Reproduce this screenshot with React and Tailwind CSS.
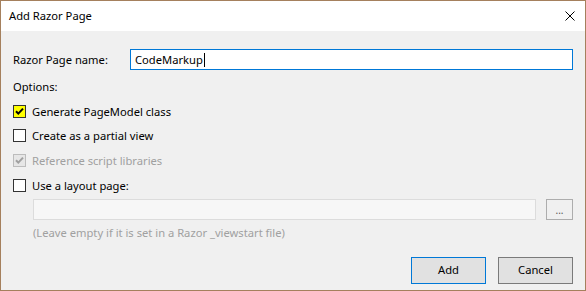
import React from 'react';

// Windows-style checkbox (13x13)
const CheckBox = ({ checked, disabled, highlight }) => {
  const box = disabled
    ? 'border-[#bcbcbc] bg-[#e6e6e6]'
    : highlight
    ? 'border-[#333333] bg-[#ffff00]'
    : 'border-[#333333] bg-white';
  return (
    <span className={`w-[13px] h-[13px] border ${box} flex items-center justify-center shrink-0`}>
      {checked && (
        <svg width="11" height="11" viewBox="0 0 11 11">
          <path
            d="M2 5.2 L4.3 7.6 L9 2.6"
            fill="none"
            stroke={disabled ? '#a0a0a0' : '#000000'}
            strokeWidth="2"
          />
        </svg>
      )}
    </span>
  );
};

const OptionRow = ({ label, checked, disabled, highlight, className = '' }) => (
  <div className={`flex items-center h-[13px] gap-[6px] ${className}`}>
    <CheckBox checked={checked} disabled={disabled} highlight={highlight} />
    <span className={`leading-[13px] whitespace-nowrap ${disabled ? 'text-[#a0a0a0]' : 'text-black'}`}>{label}</span>
  </div>
);

export default function App() {
  return (
    <div className="w-[586px] h-[291px] border border-[#a5805d] flex flex-col font-['Segoe_UI','Noto_Sans',sans-serif] text-[11.2px] text-black">
      {/* Title bar */}
      <div className="h-[30px] bg-white flex items-center justify-between pl-[8px] pr-[10px] shrink-0">
        <span className="leading-[16px]">Add Razor Page</span>
        <svg width="10" height="10" viewBox="0 0 10 10">
          <path d="M0.5 0.5 L9.5 9.5 M9.5 0.5 L0.5 9.5" stroke="#000000" strokeWidth="1" />
        </svg>
      </div>

      {/* Body */}
      <div className="flex-1 bg-[#f0f0f0] flex flex-col px-[12px] pt-[18px] pb-[6px]">
        <div className="flex items-center h-[21px]">
          <span className="w-[117px] shrink-0 leading-[16px]">Razor Page name:</span>
          <div className="flex-1 h-[21px] border border-[#0078d7] bg-white flex items-center pl-[4px]">
            <span className="leading-[16px]">CodeMarkup</span>
            <span className="w-px h-[14px] bg-black ml-px" />
          </div>
        </div>

        <div className="mt-[9px] leading-[16px]">Options:</div>

        <OptionRow className="mt-[10px]" label="Generate PageModel class" checked highlight />
        <OptionRow className="mt-[11px]" label="Create as a partial view" />
        <OptionRow className="mt-[12px]" label="Reference script libraries" checked disabled />
        <OptionRow className="mt-[12px]" label="Use a layout page:" />

        <div className="mt-[7px] flex items-center pl-[20px] gap-[10px] h-[21px]">
          <div className="flex-1 h-[21px] border border-[#dcdcdc] bg-[#f7f7f7]" />
          <div className="w-[27px] h-[21px] border border-[#adadad] bg-[#f0f0f0] flex items-center justify-center text-[10px] leading-[10px] text-[#555555]">
            ...
          </div>
        </div>

        <div className="mt-[5px] pl-[20px] leading-[16px] text-[#a0a0a0]">
          (Leave empty if it is set in a Razor _viewstart file)
        </div>

        <div className="mt-auto flex justify-end gap-[12px]">
          <button className="w-[75px] h-[27px] border border-[#0078d7] bg-[#e1e1e1] text-[11.2px]">Add</button>
          <button className="w-[75px] h-[27px] border border-[#7a7a7a] bg-[#e1e1e1] text-[11.2px]">Cancel</button>
        </div>
      </div>
    </div>
  );
}
